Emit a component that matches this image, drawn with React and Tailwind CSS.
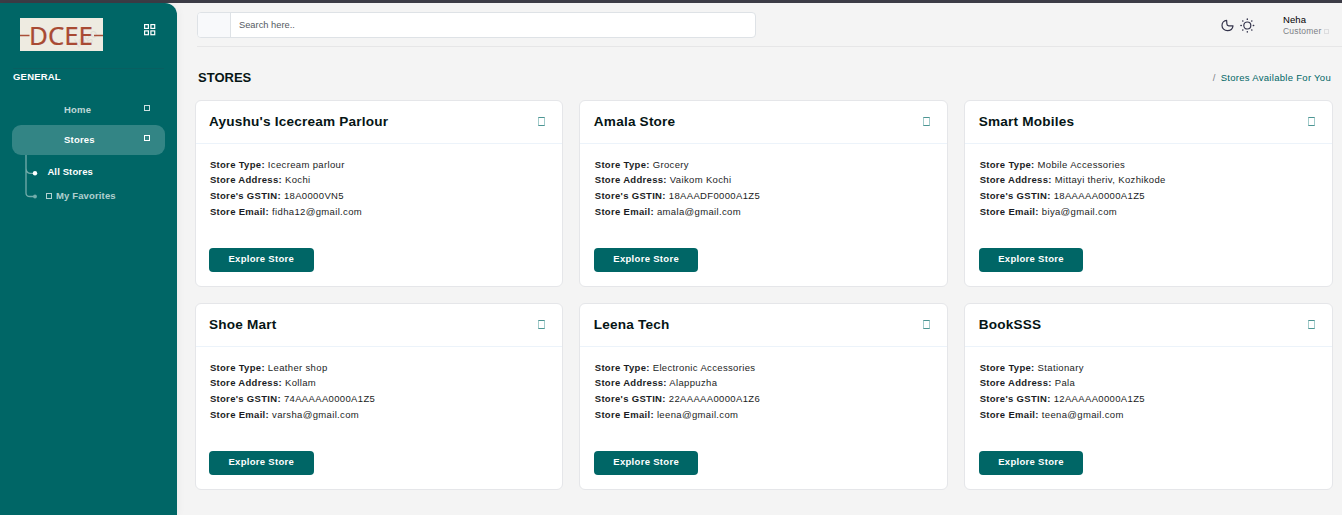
const stores = [
  { name: "Ayushu's Icecream Parlour", type: "Icecream parlour", address: "Kochi", gstin: "18A0000VN5", email: "fidha12@gmail.com" },
  { name: "Amala Store", type: "Grocery", address: "Vaikom Kochi", gstin: "18AAADF0000A1Z5", email: "amala@gmail.com" },
  { name: "Smart Mobiles", type: "Mobile Accessories", address: "Mittayi theriv, Kozhikode", gstin: "18AAAAA0000A1Z5", email: "biya@gmail.com" },
  { name: "Shoe Mart", type: "Leather shop", address: "Kollam", gstin: "74AAAAA0000A1Z5", email: "varsha@gmail.com" },
  { name: "Leena Tech", type: "Electronic Accessories", address: "Alappuzha", gstin: "22AAAAA0000A1Z6", email: "leena@gmail.com" },
  { name: "BookSSS", type: "Stationary", address: "Pala", gstin: "12AAAAA0000A1Z5", email: "teena@gmail.com" },
];

function Box({ className }) {
  return <span className={`block shrink-0 border ${className}`} />;
}

function Logo() {
  return (
    <svg width="83" height="33" viewBox="0 0 83 33" className="block">
      <rect width="83" height="33" fill="#eeebe1" />
      <text x="58" y="30" transform="rotate(-32 58 30)" fontSize="12" fontWeight="400" letterSpacing="0" fill="#e0ddd4" fontFamily="Open Sans, sans-serif">logo</text>
      <path d="M0 17.5h9.5M74 17.5h9" stroke="#a94f39" strokeWidth="1.3" />
      <text x="9" y="27" fontSize="25.5" fontWeight="400" letterSpacing="0" textLength="64" lengthAdjust="spacingAndGlyphs" fill="#a84a33" stroke="#a84a33" strokeWidth="0.2" fontFamily="Noto Sans, sans-serif">DCEE</text>
    </svg>
  );
}

function Sidebar() {
  return (
    <aside className="w-[177px] shrink-0 rounded-tr-[12px] bg-[#006666] pt-[15px] text-[9.5px] font-bold tracking-[0.2px] text-white shadow-[0_0_10px_rgba(0,0,0,0.06)]">
      <div className="flex h-[33px] justify-between pr-[21px] pl-5">
        <Logo />
        <svg width="12" height="12" viewBox="0 0 12 12" className="mt-1.5" fill="none" stroke="#fff" strokeWidth="1.2">
          <rect x="0.6" y="0.6" width="3.8" height="3.8" />
          <rect x="6.900" y="0.6" width="3.8" height="3.8" />
          <rect x="0.6" y="6.900" width="3.8" height="3.8" />
          <rect x="6.900" y="6.900" width="3.8" height="3.8" />
        </svg>
      </div>
      <div className="mx-[13px] mt-[17px] border-t border-[#085f61] pt-0.5 leading-3">GENERAL</div>
      <nav className="mx-3 mt-3">
        <div className="flex h-[30px] items-center justify-between pr-[15px] pl-[52px] text-white/75">
          <span>Home</span>
          <Box className="mb-1 h-1.5 w-[6px] border-white/80" />
        </div>
        <div className="flex h-[30px] items-center justify-between rounded-[9px] bg-[#338585] pr-[15px] pl-[52px]">
          <span>Stores</span>
          <Box className="mb-1 h-1.5 w-[6px] border-white" />
        </div>
        <div className="flex">
          <svg width="15" height="46" viewBox="0 0 15 46" className="ml-[13px] shrink-0" fill="none" stroke="#73adab" strokeWidth="1.3">
            <path d="M1 0v38Q1 41.5 5 41.5h5M1 13Q1 18 5 18.300h5" />
            <circle cx="10" cy="18.3" r="2.2" fill="#fff" stroke="none" />
            <circle cx="10" cy="41.5" r="1.9" fill="#73adab" stroke="none" />
          </svg>
          <div className="pt-[11px] pl-[7.4px] leading-3">
            <div className="tracking-[0.12px]">All Stores</div>
            <div className="mt-3 flex items-center text-white/70">
              <Box className="mr-1 ml-[-1.4px] h-1.5 w-[6px] border-white/70" />
              <span className="tracking-[0.14px]">My Favorites</span>
            </div>
          </div>
        </div>
      </nav>
    </aside>
  );
}

function Header() {
  return (
    <header className="ml-5 flex h-[44px] justify-between border-b border-[#e6e6e7] pr-[10px]">
      <div className="mt-[9px] flex h-[26px] w-[559px] overflow-hidden rounded border border-[#dee2e6] bg-white">
        <div className="w-[33px] border-r border-[#dee2e6] bg-[#f8f9fb]" />
        <span className="pl-2 text-[9.3px] leading-6 text-[#545a62]">Search here..</span>
      </div>
      <div className="flex">
        <svg width="13" height="13" viewBox="0 0 13 13" className="mt-[16px]" fill="none" stroke="#33334b" strokeWidth="1.2" strokeLinecap="round" strokeLinejoin="round">
          <path d="M5.600 1.300C3.100 1.600 1 3.700 1 6.400c0 3 2.400 5.300 5.400 5.300 2.900 0 5.200-1.800 5.600-4.900H7.800C6.600 6.800 5.900 6.200 5.900 5.100z" />
        </svg>
        <svg width="15" height="15" viewBox="0 0 15 15" className="mt-[14.500px] ml-[6px]" fill="none" stroke="#33334b" strokeWidth="1.2" strokeLinecap="round">
          <circle cx="7.300" cy="7.500" r="3.500" />
          <path d="M7.300 1v.4M7.300 13.600v.4M.9 7.500h.4M13.300 7.500h.4M2.700 2.900l.2.2M11.700 11.900l.2.2M11.900 2.900l-.2.2M2.900 11.900l-.2.2" strokeWidth="1.400" />
        </svg>
        <div className="mt-[11px] ml-[28px] w-[49px]">
          <div className="text-[9.5px] leading-3 tracking-[0.1px] text-black">Neha</div>
          <div className="flex items-center text-[8.5px] leading-[11px] tracking-[0.2px] text-[#7c7f86]">
            Customer
            <Box className="ml-[3px] h-[5px] w-[5px] border-[#dddddf]" />
          </div>
        </div>
      </div>
    </header>
  );
}

function Field({ label, value }) {
  return (
    <div>
      <span className="font-bold tracking-[0.31px]">{label}</span> {value}
    </div>
  );
}

function StoreCard({ store }) {
  return (
    <article className="h-[187px] rounded-md border border-[#e5e6e9] bg-white">
      <div className="flex h-[43px] items-center justify-between border-b border-[#ecf3fa] pr-[17px] pl-[13.4px]">
        <h2 className="text-[13.6px] font-bold tracking-[0.2px] text-[#061515]">{store.name}</h2>
        <Box className="mb-px h-[9px] w-[7px] border-x-[#a3cccb] border-y-[#4c9593]" />
      </div>
      <div className="pt-[12.7px] pl-[14.3px] text-[9.5px] leading-[15.7px] tracking-[0.35px] text-[#1b1d24]">
        <Field label="Store Type:" value={store.type} />
        <Field label="Store Address:" value={store.address} />
        <Field label="Store's GSTIN:" value={store.gstin} />
        <Field label="Store Email:" value={store.email} />
      </div>
      <button className="mt-[28.3px] ml-[13.4px] block h-6 w-[104.6px] rounded bg-[#006666] pb-0.5 text-[9.5px] leading-[22px] font-bold tracking-[0.3px] text-white">
        Explore Store
      </button>
    </article>
  );
}

export default function App() {
  return (
    <div className="flex h-[515px] flex-col overflow-hidden bg-[#f4f4f4] font-['Liberation_Sans',Arial,sans-serif]">
      <div className="h-[3px] shrink-0 bg-[#3c3c46]" />
      <div className="flex flex-1">
        <Sidebar />
        <main className="min-w-0 flex-1">
          <Header />
          <div className="mr-[11px] ml-[21px] flex h-[53px] items-center justify-between pt-[9px]">
            <h1 className="text-[13px] font-bold text-[#061515]">STORES</h1>
            <div className="pt-px text-[9.5px] tracking-[0.29px] text-[#006666]">
              <span className="mr-[5px] text-[#7d8085]">/</span>
              Stores Available For You
            </div>
          </div>
          <div className="mr-[9.4px] ml-[17.6px] grid grid-cols-3 gap-x-[16.6px] gap-y-4">
            {stores.map((store) => (
              <StoreCard key={store.name} store={store} />
            ))}
          </div>
        </main>
      </div>
    </div>
  );
}
